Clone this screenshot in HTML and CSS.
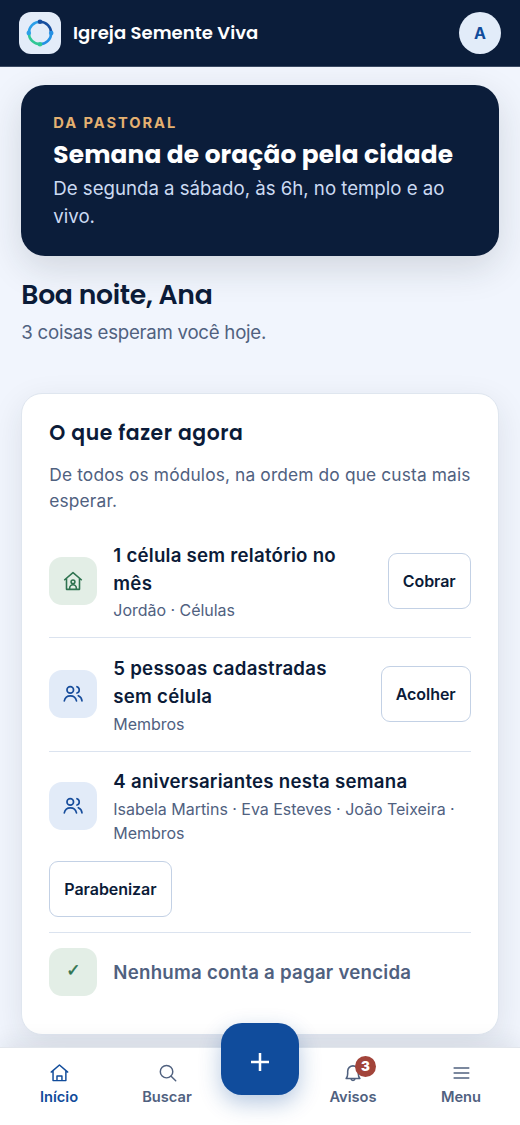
FILE: index.html
```html
<!DOCTYPE html>
<html lang="pt-BR">
<head>
<meta charset="utf-8">
<meta name="viewport" content="width=device-width, initial-scale=1">
<title>Igreja Semente Viva</title>
<link rel="stylesheet" href="styles.css">
</head>
<body>
<div class="app">
  <header class="topbar">
    <div class="logo">
      <svg width="28" height="28" viewBox="0 0 28 28" fill="none" stroke-width="2.600">
        <path d="M14 2.800A11.200 11.200 0 0 0 2.800 14" stroke="#2b9fe8"/>
        <path d="M25.200 14A11.200 11.200 0 0 1 14 25.200" stroke="#2490e4"/>
        <path d="M2.800 14A11.200 11.200 0 0 0 14 25.200" stroke="#30c795"/>
        <path d="M14 2.800A11.200 11.200 0 0 1 25.200 14" stroke="#164e9f"/>
        <circle cx="14" cy="2.800" r="2.300" fill="#164e9f"/>
        <circle cx="25.200" cy="14" r="2.300" fill="#2490e4"/>
        <circle cx="14" cy="25.200" r="2.300" fill="#30c795"/>
        <circle cx="2.800" cy="14" r="2.300" fill="#2b9fe8"/>
      </svg>
    </div>
    <div class="brand">Igreja Semente Viva</div>
    <div class="avatar">A</div>
  </header>

  <main class="content">
    <section class="banner">
      <div class="eyebrow">DA PASTORAL</div>
      <h2 class="banner-title">Semana de oração pela cidade</h2>
      <p class="banner-text">De segunda a sábado, às 6h, no templo e ao vivo.</p>
    </section>

    <h1 class="greeting">Boa noite, Ana</h1>
    <p class="subtitle">3 coisas esperam você hoje.</p>

    <section class="card">
      <h2 class="card-title">O que fazer agora</h2>
      <p class="card-text">De todos os módulos, na ordem do que custa mais esperar.</p>
      <ul class="tasks">
        <li class="task">
          <span class="tile tile-green">
            <svg width="20" height="20" viewBox="0 0 24 24" fill="none" stroke="currentColor" stroke-width="1.900" stroke-linecap="round" stroke-linejoin="round"><path d="M2 10.500 12 2l10 8.500M4.200 9v13h15.600V9"/><circle cx="12" cy="13" r="2.300"/><path d="M8 21.500v-1a4 4 0 0 1 8 0v1"/></svg>
          </span>
          <div class="info"><strong class="name">1 célula sem relatório no mês</strong><span class="meta">Jordão · Células</span></div>
          <button class="action">Cobrar</button>
        </li>
        <li class="task">
          <span class="tile tile-blue">
            <svg width="22" height="22" viewBox="0 0 24 24" fill="none" stroke="currentColor" stroke-width="1.800" stroke-linecap="round" stroke-linejoin="round"><circle cx="9" cy="7.500" r="3.600"/><path d="M2.500 19.500a6.800 6.800 0 0 1 13.300 0M16.300 4a3.700 3.700 0 0 1 0 7M17.800 13.800a6.700 6.700 0 0 1 4 5.700"/></svg>
          </span>
          <div class="info"><strong class="name">5 pessoas cadastradas sem célula</strong><span class="meta">Membros</span></div>
          <button class="action">Acolher</button>
        </li>
        <li class="task task-wrap">
          <span class="tile tile-blue">
            <svg width="22" height="22" viewBox="0 0 24 24" fill="none" stroke="currentColor" stroke-width="1.800" stroke-linecap="round" stroke-linejoin="round"><circle cx="9" cy="7.500" r="3.600"/><path d="M2.500 19.500a6.800 6.800 0 0 1 13.300 0M16.300 4a3.700 3.700 0 0 1 0 7M17.800 13.800a6.700 6.700 0 0 1 4 5.700"/></svg>
          </span>
          <div class="info"><strong class="name">4 aniversariantes nesta semana</strong><span class="meta">Isabela Martins · Eva Esteves · João Teixeira · Membros</span></div>
          <button class="action">Parabenizar</button>
        </li>
        <li class="task">
          <span class="tile tile-green check">✓</span>
          <div class="info"><strong class="name done">Nenhuma conta a pagar vencida</strong></div>
        </li>
      </ul>
    </section>
  </main>

  <nav class="tabbar">
    <a class="tab active">
      <svg width="22" height="22" viewBox="0 0 24 24" fill="none" stroke="currentColor" stroke-width="1.600" stroke-linecap="round" stroke-linejoin="round"><path d="M3.500 11 12.500 3.200l9 7.800M5.500 9.500v10.800h14V9.500M9.800 20v-4.800h5.400V20"/></svg>
      <span>Início</span>
    </a>
    <a class="tab">
      <svg width="22" height="22" viewBox="0 0 24 24" fill="none" stroke="currentColor" stroke-width="1.600" stroke-linecap="round"><circle cx="11.500" cy="10.500" r="6.800"/><path d="m16.500 15.500 5 5"/></svg>
      <span>Buscar</span>
    </a>
    <a class="fab" aria-label="Adicionar">
      <svg width="20" height="20" viewBox="0 0 20 20" fill="none" stroke="#fff" stroke-width="2.500"><path d="M10 1v18M1 10h18"/></svg>
    </a>
    <a class="tab">
      <svg width="22" height="22" viewBox="0 0 24 24" fill="none" stroke="currentColor" stroke-width="1.700" stroke-linecap="round" stroke-linejoin="round"><path d="M4.500 18h15c-1.400-1.500-1.700-3.100-1.700-5.300V10a5.800 5.800 0 0 0-11.600 0v2.700c0 2.200-.3 3.800-1.700 5.300ZM9.800 18.500c.4 2.200 4 2.200 4.400 0"/></svg>
      <span>Avisos</span>
      <b class="badge">3</b>
    </a>
    <a class="tab">
      <svg width="22" height="22" viewBox="0 0 24 24" fill="none" stroke="currentColor" stroke-width="1.600" stroke-linecap="round"><path d="M4.500 6.500h16M4.500 12h16M4.500 17.500h16"/></svg>
      <span>Menu</span>
    </a>
  </nav>
</div>
</body>
</html>
```
FILE: styles.css
```css
* { box-sizing: border-box; }
body { margin: 0; font-family: "Inter", sans-serif; color: #0b1b38; background: #f1f5fd; }
h1, h2, p, ul { margin: 0; padding: 0; }
.app { height: 1125px; overflow: hidden; display: flex; flex-direction: column; }

.topbar { flex: none; height: 67px; padding: 0 19px; display: flex; align-items: center; gap: 12px; background: #0b1d3a; border-bottom: 1px solid #3b4a63; }
.logo { width: 42px; height: 42px; border-radius: 12px; background: #e3ecf9; display: grid; place-items: center; }
.brand { flex: 1; font: 600 18px/28px "Poppins", "Inter", sans-serif; letter-spacing: .06px; color: #fff; white-space: nowrap; }
.avatar { width: 42px; height: 42px; border-radius: 50%; background: #e2ecf9; color: #114c9b; font-size: 16px; font-weight: 700; display: grid; place-items: center; }

.content { flex: 1; min-height: 0; padding: 18px 21.33px 0; }
.banner { height: 171px; border-radius: 24px; padding: 27px 32px 0; background: #0b1d3a; box-shadow: 0 12px 36px rgba(30, 40, 50, .15); }
.eyebrow { font-size: 14.67px; line-height: 22px; font-weight: 700; letter-spacing: 1.950px; color: #e5b171; }
.banner-title { font: 700 24.800px/32px "Poppins", "Inter", sans-serif; letter-spacing: .15px; color: #fff; margin-top: 4.500px; white-space: nowrap; }
.banner-text { font-size: 18.67px; line-height: 28px; letter-spacing: -.02px; color: #cbdaf2; margin-top: 4.500px; }

.greeting { font: 600 26.67px/36px "Poppins", "Inter", sans-serif; letter-spacing: -.3px; margin-top: 21px; white-space: nowrap; }
.subtitle { font-size: 18.67px; line-height: 28px; letter-spacing: -.26px; color: #50617f; margin-top: 6px; }

.card { height: 642px; margin-top: 46px; padding: 26px 27px 0; background: #fff; border: 1px solid #dfe6ef; border-radius: 21px; box-shadow: 0 10px 32px rgba(30, 40, 50, .1); }
.card-title { font: 600 20.400px/26px "Poppins", "Inter", sans-serif; letter-spacing: .55px; }
.card-text { font-size: 17.33px; line-height: 25.500px; letter-spacing: .14px; color: #50617f; margin-top: 16px; }

.tasks { list-style: none; margin-top: 12px; }
.task { display: flex; align-items: center; gap: 16px; padding: 16.700px 0 15px; border-bottom: 1px solid #dbe3ef; }
.task:last-child { padding-top: 15.200px; border-bottom: 0; }
.task-wrap { flex-wrap: wrap; }
.task-wrap .info { flex-basis: 300px; }
.tile { flex: none; width: 48px; height: 48px; margin-bottom: 2px; border-radius: 13px; display: grid; place-items: center; }
.tile-green { background: #e3eee6; color: #2f7350; }
.tile-blue { background: #e2ebf8; color: #164c9b; }
.check { font: 700 17px/1 "DejaVu Sans", sans-serif; padding-bottom: 3px; -webkit-text-stroke: .5px currentColor; }
.info { flex: 1; min-width: 0; display: flex; flex-direction: column; }
.name { font-size: 18.67px; line-height: 28px; font-weight: 600; letter-spacing: .24px; }
.done { color: #50617f; }
.meta { font-size: 16px; line-height: 24px; letter-spacing: -.03px; color: #50617f; margin-top: .6px; }
.action { flex: none; height: 56px; margin-bottom: 2px; padding: 0 14px; border: 1px solid #c3d1e5; border-radius: 9px; background: #fff; font: 600 16px/24px "Inter", sans-serif; letter-spacing: -.05px; color: #0b1b38; }
.task-wrap .action { margin-bottom: 0; }

.tabbar { position: relative; flex: none; height: 78px; padding: 0 5px; background: #fff; border-top: 1px solid #e2e6ec; box-shadow: 0 -6px 20px rgba(30, 40, 50, .08); display: grid; grid-template-columns: 108px 108px 78px 108px 108px; justify-content: center; }
.tab { position: relative; display: flex; flex-direction: column; align-items: center; padding-top: 14px; gap: 3px; font-size: 14.67px; line-height: 20px; font-weight: 600; color: #50617f; }
.active { color: #114c9b; }
.fab { width: 78px; height: 72px; margin-top: -24.600px; padding-top: 5px; border-radius: 21px; background: #104c9c; display: grid; place-items: center; box-shadow: 0 8px 22px rgba(16, 76, 156, .3); }
.badge { position: absolute; left: 56px; top: 8px; width: 21px; height: 21px; border-radius: 50%; background: #a2443a; color: #fff; font-size: 13.300px; line-height: 21px; text-align: center; }
```
